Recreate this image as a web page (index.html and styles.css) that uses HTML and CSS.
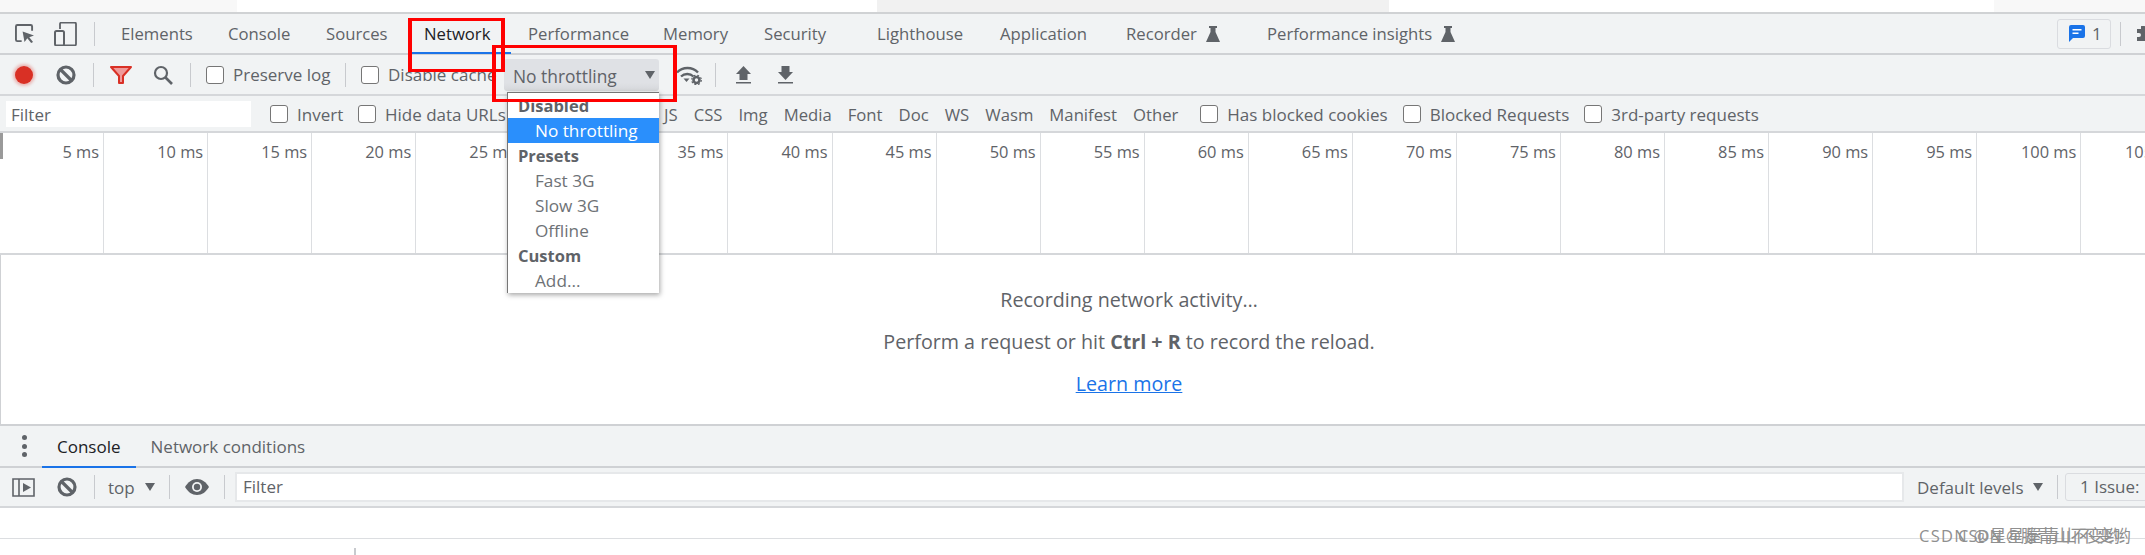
FILE: index.html
```html
<!DOCTYPE html>
<html lang="en">
<head>
<meta charset="utf-8">
<title>DevTools Network</title>
<link rel="stylesheet" href="styles.css">
</head>
<body>
<div class="topband"><span class="patch p1"></span><span class="patch p2"></span><span class="patch p3"></span></div>

<header class="tabbar">
  <svg class="ic ic-inspect" viewBox="0 0 20 20"><path d="M7 18H2.500A1.500 1.500 0 0 1 1 16.500v-14A1.500 1.500 0 0 1 2.500 1h14A1.500 1.500 0 0 1 18 2.500V7" fill="none" stroke="#5f6368" stroke-width="2"/><path d="M8 8l12 4-5 2 4 5-2 1-4-5-3 4z" fill="#5f6368"/></svg>
  <svg class="ic ic-device" viewBox="0 0 23 24"><path d="M6 7V2a1.500 1.500 0 0 1 1.500-1.500h13A1.500 1.500 0 0 1 22 2v20a1.500 1.500 0 0 1-1.500 1.500H10" fill="none" stroke="#5f6368" stroke-width="1.800"/><rect x="1" y="9" width="9" height="14.500" rx="1.500" fill="none" stroke="#5f6368" stroke-width="2"/></svg>
  <i class="sep sep-a"></i>
  <nav class="tabs">
    <span class="tab">Elements</span>
    <span class="tab">Console</span>
    <span class="tab">Sources</span>
    <span class="tab tab-on">Network</span>
    <span class="tab">Performance</span>
    <span class="tab">Memory</span>
    <span class="tab">Security</span>
    <span class="tab">Lighthouse</span>
    <span class="tab">Application</span>
    <span class="tab">Recorder<svg class="flask" viewBox="0 0 14 16"><path d="M3 0h8v2H9.500v4L14 16H0L4.500 6V2H3z" fill="#5f6368"/></svg></span>
    <span class="tab">Performance insights<svg class="flask" viewBox="0 0 14 16"><path d="M3 0h8v2H9.500v4L14 16H0L4.500 6V2H3z" fill="#5f6368"/></svg></span>
  </nav>
  <div class="issues">
    <span class="issue-btn"><svg class="chat" viewBox="0 0 16 17"><path d="M2 0h12a2 2 0 0 1 2 2v9a2 2 0 0 1-2 2H4l-4 4V2a2 2 0 0 1 2-2z" fill="#1a73e8"/><path d="M3.500 4h9v1.600h-9zM3.500 7.500h6v1.600h-6z" fill="#fff"/></svg>1</span>
    <i class="sep sep-b"></i>
    <svg class="puzzle" viewBox="0 0 16 16"><path d="M0 3h4V1a2 2 0 0 1 4 0v2h4v4h2a2 2 0 0 1 0 4h-2v4H0v-4h2a2 2 0 0 0 0-4H0z" fill="#5f6368"/></svg>
  </div>
</header>

<section class="toolbar">
  <span class="rec"></span>
  <svg class="ic ic-clear" viewBox="0 0 20 20"><circle cx="10" cy="10" r="8" fill="none" stroke="#5f6368" stroke-width="3.200"/><path d="M4.500 4.500l11 11" stroke="#5f6368" stroke-width="3.200"/></svg>
  <i class="sep sep-c"></i>
  <svg class="ic ic-filter" viewBox="0 0 22 18"><path d="M1 1h20l-8 9v7H9v-7z" fill="#ef9a9a" stroke="#d93025" stroke-width="2" stroke-linejoin="round"/></svg>
  <svg class="ic ic-search" viewBox="0 0 20 20"><circle cx="8" cy="8" r="6" fill="none" stroke="#5f6368" stroke-width="2.200"/><path d="M12.500 12.500l6.500 6.500" stroke="#5f6368" stroke-width="2.600"/></svg>
  <i class="sep sep-d"></i>
  <label class="chk chk-preserve"><i class="box"></i>Preserve log</label>
  <i class="sep sep-e"></i>
  <label class="chk chk-cache"><i class="box"></i>Disable cache</label>
  <span class="select">No throttling<i class="tri"></i></span>
  <svg class="ic ic-wifi" viewBox="0 0 26 20"><path d="M1 7.500a14.500 14.500 0 0 1 21 0M5 11.500a9 9 0 0 1 12.500 0" fill="none" stroke="#5f6368" stroke-width="2.400"/><path d="M7.500 13.500h6l-3 3.500z" fill="#5f6368"/><circle cx="20.500" cy="15" r="3" fill="none" stroke="#5f6368" stroke-width="2.600"/><circle cx="20.500" cy="15" r="4.800" fill="none" stroke="#5f6368" stroke-width="1.200" stroke-dasharray="1.900 1.900"/></svg>
  <i class="sep sep-f"></i>
  <svg class="ic ic-arrow ic-up" viewBox="0 0 15 18"><path d="M7.500 0L15 8h-3.500v6h-8V8H0zM0 16h15v1.500H0z" fill="#5f6368"/></svg>
  <svg class="ic ic-arrow ic-down" viewBox="0 0 15 18"><path d="M3.500 0h8v6H15l-7.500 8L0 6h3.500zM0 16h15v1.500H0z" fill="#5f6368"/></svg>
</section>

<section class="filterbar">
  <span class="filter-input">Filter</span>
  <label class="chk chk-invert"><i class="box"></i>Invert</label>
  <label class="chk chk-hide"><i class="box"></i>Hide data URLs</label>
  <div class="types">
    <span class="type">JS</span><span class="type">CSS</span><span class="type">Img</span><span class="type">Media</span><span class="type">Font</span><span class="type">Doc</span><span class="type">WS</span><span class="type">Wasm</span><span class="type">Manifest</span><span class="type">Other</span>
  </div>
  <label class="chk chk-blocked"><i class="box"></i>Has blocked cookies</label>
  <label class="chk chk-req"><i class="box"></i>Blocked Requests</label>
  <label class="chk chk-third"><i class="box"></i>3rd-party requests</label>
</section>

<section class="timeline">
  <span class="tick">5 ms</span><span class="tick">10 ms</span><span class="tick">15 ms</span><span class="tick">20 ms</span><span class="tick">25 ms</span><span class="tick">30 ms</span><span class="tick">35 ms</span><span class="tick">40 ms</span><span class="tick">45 ms</span><span class="tick">50 ms</span><span class="tick">55 ms</span><span class="tick">60 ms</span><span class="tick">65 ms</span><span class="tick">70 ms</span><span class="tick">75 ms</span><span class="tick">80 ms</span><span class="tick">85 ms</span><span class="tick">90 ms</span><span class="tick">95 ms</span><span class="tick">100 ms</span><span class="tick">105 ms</span>
</section>

<main class="empty">
  <p>Recording network activity…</p>
  <p>Perform a request or hit <b>Ctrl + R</b> to record the reload.</p>
  <p><a class="learn">Learn more</a></p>
</main>

<section class="drawer-tabs">
  <span class="dots"><i></i><i></i><i></i></span>
  <span class="dtab dtab-on">Console</span>
  <span class="dtab">Network conditions</span>
</section>

<section class="console-bar">
  <svg class="ic ic-side" viewBox="0 0 23 19"><path d="M1 1h21v17H1zM7 1v17" fill="none" stroke="#5f6368" stroke-width="1.600"/><path d="M11 5l8 4.500-8 4.500z" fill="#5f6368"/></svg>
  <svg class="ic ic-clear2" viewBox="0 0 20 20"><circle cx="10" cy="10" r="8" fill="none" stroke="#5f6368" stroke-width="3.200"/><path d="M4.500 4.500l11 11" stroke="#5f6368" stroke-width="3.200"/></svg>
  <i class="sep sep-g"></i>
  <span class="ctx">top<i class="tri"></i></span>
  <i class="sep sep-h"></i>
  <svg class="ic ic-eye" viewBox="0 0 24 16"><path d="M0 8C3 3 7 0 12 0s9 3 12 8c-3 5-7 8-12 8S3 13 0 8z" fill="#5f6368"/><circle cx="12" cy="8" r="5" fill="#f1f3f4"/><circle cx="12" cy="8" r="3.200" fill="#5f6368"/></svg>
  <i class="sep sep-i"></i>
  <span class="console-filter">Filter</span>
  <span class="levels">Default levels<i class="tri"></i></span>
  <i class="sep sep-j"></i>
  <span class="issue-count">1 Issue:</span>
</section>

<section class="console-blank"></section>
<section class="page-rest"><i class="rest-tick"></i></section>

<div class="menu">
  <div class="m-head">Disabled</div>
  <div class="m-item m-on">No throttling</div>
  <div class="m-head">Presets</div>
  <div class="m-item">Fast 3G</div>
  <div class="m-item">Slow 3G</div>
  <div class="m-item">Offline</div>
  <div class="m-head">Custom</div>
  <div class="m-item">Add...</div>
</div>

<div class="redbox redbox-tab"></div>
<div class="redbox redbox-select"></div>

<div class="wm wm-a">CSDN @星星屋青山不变哟</div>
<div class="wm wm-b">CSDN @滕青山不变哟</div>
</body>
</html>
```

FILE: styles.css
```css
* { box-sizing: border-box; }
html, body { margin: 0; padding: 0; }
body {
  width: 2145px; height: 555px; overflow: hidden; position: relative;
  background: #fff; color: #5f6368;
  font-family: "Open Sans", "Noto Sans", sans-serif; font-size: 17px;
}
i { display: block; font-style: normal; }
.ic { display: block; flex: none; }

.topband { height: 14px; position: relative; border-bottom: 2px solid #d0d2d4; }
.patch { position: absolute; top: 0; height: 12px; }
.p1 { left: 0; width: 237px; background: #f8f8f8; }
.p2 { left: 877px; width: 512px; background: #f1f1f1; }
.p3 { left: 1994px; width: 151px; background: #f8f8f8; }

.sep { flex: none; width: 1px; background: #c8cace; }

/* tab bar */
.tabbar {
  height: 41px; background: #f1f3f4; border-bottom: 2px solid #cfd1d4;
  display: flex; align-items: center; padding-left: 15px;
}
.ic-inspect { width: 19px; height: 19px; }
.ic-device { width: 23px; height: 24px; margin-left: 20px; }
.sep-a { height: 24px; margin-left: 17px; }
.tabs {
  display: grid; height: 39px; margin-left: 8px;
  grid-template-columns: 107px 98px 98px 104px 135px 101px 113px 123px 126px 141px 220px;
}
.tab { display: flex; align-items: center; padding-left: 18px; color: #5f6368; white-space: nowrap; position: relative; font-size: 16.700px; }
.tab-on { color: #202124; }
.tab-on::after { content: ""; position: absolute; left: 5px; right: -1px; bottom: -1px; height: 2px; background: #1a73e8; }
.flask { width: 14px; height: 16px; margin-left: 9px; }
.issues { margin-left: auto; display: flex; align-items: center; }
.issue-btn {
  width: 54px; height: 30px; border: 1px solid #dadce0; border-radius: 3px;
  display: flex; align-items: center; padding-left: 11px; gap: 7px;
}
.chat { width: 16px; height: 17px; }
.sep-b { height: 24px; margin-left: 9px; }
.puzzle { width: 16px; height: 16px; margin: 0 -8px 0 16px; flex: none; }

/* toolbar */
.toolbar {
  height: 41px; background: #f1f3f4; border-bottom: 2px solid #d5d7da;
  display: flex; align-items: center; padding-left: 15px;
}
.rec { width: 18px; height: 18px; border-radius: 50%; background: #d93025; box-shadow: 0 0 3px 2px rgba(217,48,37,.3); flex: none; }
.ic-clear { width: 20px; height: 20px; margin-left: 23px; }
.sep-c { height: 24px; margin-left: 17px; }
.ic-filter { width: 22px; height: 18px; margin-left: 16px; }
.ic-search { width: 20px; height: 20px; margin-left: 21px; }
.sep-d { height: 24px; margin-left: 17px; }
.chk { display: flex; align-items: center; white-space: nowrap; flex: none; }
.box { width: 18px; height: 18px; border: 1.500px solid #767676; border-radius: 3px; background: #fff; margin-right: 9px; flex: none; }
.chk-preserve { margin-left: 15px; width: 124px; }
.sep-e { height: 24px; margin-left: 15px; }
.chk-cache { margin-left: 15px; width: 135px; }
.select {
  width: 155px; height: 32px; margin-left: 8px; flex: none; position: relative;
  background: linear-gradient(#dfe1e5 75%, #d5d7da); border-radius: 3px;
  display: flex; align-items: center; padding: 2px 0 0 9px; font-size: 17.400px;
}
.tri { width: 0; height: 0; border-left: 5px solid transparent; border-right: 5px solid transparent; border-top: 8px solid #5f6368; }
.select .tri { position: absolute; right: 4px; top: 12px; }
.ic-wifi { width: 26px; height: 20px; margin-left: 17px; }
.sep-f { height: 24px; margin-left: 13px; }
.ic-arrow { width: 15px; height: 18px; }
.ic-up { margin-left: 20px; }
.ic-down { margin-left: 27px; }

/* filter bar */
.filterbar {
  height: 37px; background: #f1f3f4; border-bottom: 2px solid #d5d7da;
  display: flex; align-items: center; padding: 1px 0 0 6px;
}
.filter-input { width: 245px; height: 26px; background: #fff; padding-left: 5px; line-height: 28px; flex: none; }
.chk-invert { margin-left: 19px; width: 72px; }
.chk-hide { margin-left: 16px; width: 148px; }
.types { display: flex; gap: 16px; margin-left: 158px; flex: none; font-size: 16.700px; }
.type { white-space: nowrap; }
.chk-blocked { margin-left: 22px; }
.chk-req { margin-left: 15px; }
.chk-third { margin-left: 15px; }

/* timeline */
.timeline {
  height: 122px; display: grid; grid-template-columns: repeat(21, 104.070px);
  border-bottom: 2px solid #d5d7da; position: relative; overflow: hidden;
}
.timeline::before { content: ""; position: absolute; left: 0; top: 0; width: 3px; height: 26px; background: #9a9a9a; }
.tick {
  border-right: 1px solid #dcdee1; text-align: right; padding: 7px 4px 0 0; height: 120px;
  color: #5f6368; white-space: nowrap; font-size: 16.400px;
}

/* empty */
.empty {
  height: 171px; border-bottom: 2px solid #cfd1d4; border-left: 1px solid #cfd1d4;
  display: flex; flex-direction: column; align-items: center; padding: 32px 0 0 112px; gap: 17px;
  font-size: 19.700px;
}
.empty p { margin: 0; line-height: 25px; white-space: nowrap; }
.learn { color: #1a73e8; text-decoration: underline; }

/* drawer */
.drawer-tabs {
  height: 42px; background: #f1f3f4; border-bottom: 2px solid #cfd1d4;
  display: flex; align-items: stretch; padding-left: 22px;
}
.dots { width: 20px; display: flex; flex-direction: column; justify-content: center; gap: 3.500px; flex: none; }
.dots i { width: 5px; height: 5px; border-radius: 50%; background: #5f6368; }
.dtab { display: flex; align-items: center; padding: 0 15px; position: relative; }
.dtab-on { color: #202124; }
.dtab-on::after { content: ""; position: absolute; left: 0; right: 0; bottom: -2px; height: 2px; background: #1a73e8; }

.console-bar {
  height: 40px; background: #f1f3f4; border-bottom: 2px solid #d5d7da;
  display: flex; align-items: center; padding-left: 12px;
}
.ic-side { width: 23px; height: 19px; }
.ic-clear2 { width: 20px; height: 20px; margin-left: 22px; }
.sep-g { height: 24px; margin-left: 17px; }
.ctx { display: flex; align-items: center; margin-left: 13px; width: 47px; justify-content: space-between; flex: none; }
.sep-h { height: 24px; margin-left: 14px; }
.ic-eye { width: 24px; height: 16px; margin-left: 15px; }
.sep-i { height: 24px; margin-left: 15px; }
.console-filter {
  width: 1669px; height: 30px; margin-left: 10px; flex: none;
  background: #fff; border: 2px solid #e6e8ea; padding-left: 6px; line-height: 26px;
}
.levels { display: flex; align-items: center; gap: 9px; margin-left: 13px; flex: none; white-space: nowrap; width: 124px; }
.sep-j { height: 24px; margin-left: 16px; }
.issue-count {
  margin-left: 7px; width: 100px; height: 28px; flex: none; border: 1px solid #dadce0; border-radius: 3px;
  padding-left: 14px; line-height: 26px; white-space: nowrap;
}
.console-blank { height: 31px; border-bottom: 1px solid #dcdee1; }
.page-rest { height: 17px; position: relative; }
.rest-tick { position: absolute; left: 354px; top: 9px; width: 2px; height: 8px; background: #c8cace; }

/* dropdown */
.menu {
  position: absolute; left: 507px; top: 92px; width: 152px; height: 201px;
  background: #fff; border-left: 1px solid #767676; border-top: 1px solid #767676;
  box-shadow: 1px 2px 5px rgba(0,0,0,.35); font-size: 17.200px;
}
.m-head, .m-item { height: 25px; line-height: 25px; white-space: nowrap; }
.m-head { padding-left: 10px; font-weight: 700; color: #5f6368; font-size: 16.500px; }
.m-item { padding-left: 27px; color: #6e7276; }
.m-on { background: #2a8ffc; color: #fff; }

/* annotations */
.redbox { position: absolute; border: solid #f00; border-width: 3px 4px; }
.redbox-tab { left: 408px; top: 18px; width: 97px; height: 54px; }
.redbox-select { left: 492px; top: 45px; width: 185px; height: 57px; }

/* watermark */
.wm { position: absolute; top: 523px; font-size: 16.500px; color: #8f8f8f; white-space: nowrap; font-family: "Open Sans", "Noto Sans CJK SC", sans-serif; }
.wm-a { left: 1919px; letter-spacing: 1.300px; }
.wm-b { left: 1958px; }
```
